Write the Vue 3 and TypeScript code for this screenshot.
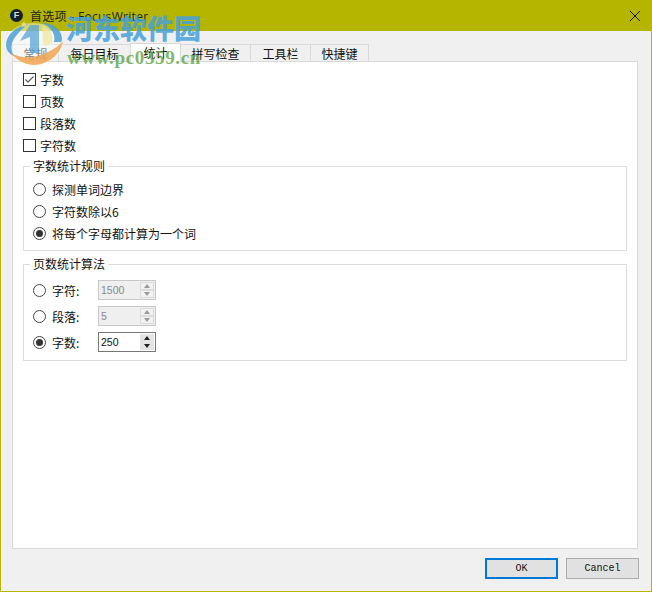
<script setup lang="ts">
const checks = [
  { label: '字数', on: true },
  { label: '页数', on: false },
  { label: '段落数', on: false },
  { label: '字符数', on: false },
]
const tabs = [
  { label: '常规', w: 47 },
  { label: '每日目标', w: 72 },
  { label: '统计', w: 51 },
  { label: '拼写检查', w: 70 },
  { label: '工具栏', w: 60 },
  { label: '快捷键', w: 58 },
]
const rules = [
  { label: '探测单词边界', on: false },
  { label: '字符数除以6', on: false },
  { label: '将每个字母都计算为一个词', on: true },
]
const algos = [
  { label: '字符:', value: '1500', on: false },
  { label: '段落:', value: '5', on: false },
  { label: '字数:', value: '250', on: true },
]
</script>

<template>
  <div class="win">
    <header class="title">
      <span class="appicon">F</span>
      <span class="title-text">首选项 - FocusWriter</span>
      <svg class="close" width="12" height="12" viewBox="0 0 12 12"><path d="M1 1L11 11M11 1L1 11" stroke="#111" stroke-width="1" fill="none" /></svg>
    </header>
    <main class="body">
      <nav class="tabs">
        <div v-for="(t, i) in tabs" :key="t.label" class="tab" :class="{ active: i === 2 }" :style="{ width: t.w + 'px' }">{{ t.label }}</div>
      </nav>
      <section class="pane">
        <div class="checks">
          <label v-for="c in checks" :key="c.label" class="check">
            <span class="box">
              <svg v-if="c.on" width="11" height="11" viewBox="0 0 11 11"><path d="M1.5 5.5L4 8L9.5 2.5" stroke="#666" stroke-width="1.3" fill="none" /></svg>
            </span>
            {{ c.label }}
          </label>
        </div>
        <fieldset class="group one">
          <legend>字数统计规则</legend>
          <label v-for="r in rules" :key="r.label" class="radio-row">
            <span class="radio" :class="{ on: r.on }"></span>{{ r.label }}
          </label>
        </fieldset>
        <fieldset class="group two">
          <legend>页数统计算法</legend>
          <div v-for="a in algos" :key="a.label" class="algo">
            <span class="radio" :class="{ on: a.on }"></span>
            <span class="algo-label">{{ a.label }}</span>
            <div class="spin" :class="{ enabled: a.on }">
              <span class="spin-val">{{ a.value }}</span>
              <span class="arrows">
                <span class="arrow"><i class="up"></i></span>
                <span class="arrow"><i class="down"></i></span>
              </span>
            </div>
          </div>
        </fieldset>
      </section>
      <footer class="foot">
        <button class="btn primary">OK</button>
        <button class="btn">Cancel</button>
      </footer>
    </main>

    <div class="mark">
      <svg class="logo" width="70" height="70" viewBox="0 0 70 70">
        <ellipse cx="33" cy="44" rx="29" ry="21" fill="#ffffff" opacity=".45" />
        <path d="M27 24C14 27 5 35 5 45C5 50 8 54 13 56C9 49 10 42 15 36C18 32 22 28 27 24Z" fill="#4f9fd6" opacity=".85" />
        <path d="M29 25H38V53H29V37L19 41C22 36 26 30 29 25Z" fill="#4f9fd6" opacity=".7" />
        <path d="M41 23C52 23 60 29 61 38C61 40 61 41 60 42L53 42C55 34 50 27 41 23Z" fill="#4f9fd6" opacity=".85" />
        <path d="M41 25C48 28 53 34 51 43L44 46L42 42Z" fill="#f0e59a" opacity=".7" />
        <path d="M62 41C60 54 47 65 33 65C24 65 15 60 10 53C19 58 28 58 36 56C47 53 56 48 62 41Z" fill="#f0a450" opacity=".85" />
        <path d="M23 21L24 23.5H26.5L24.6 25L25.3 27.5L23 26L20.7 27.5L21.4 25L19.5 23.5H22Z" fill="#e8dc80" />
      </svg>
      <span class="mark-cn">河东软件园</span>
      <span class="mark-url">www.pc0359.cn</span>
    </div>
  </div>
</template>

<style>
html, body { margin: 0; padding: 0; }
</style>

<style scoped>
.win {
  position: relative;
  width: 652px;
  height: 592px;
  box-sizing: border-box;
  display: flex;
  flex-direction: column;
  border: 1px solid #b5b500;
  border-top: 0;
  background: #f0f0f0;
  overflow: hidden;
  font-family: "Noto Sans CJK SC", "Liberation Sans", sans-serif;
  font-size: 12px;
  color: #111;
}
.title {
  height: 31px;
  flex: none;
  background: #b5b500;
  display: flex;
  align-items: center;
  padding: 0 9px 0 9px;
  box-sizing: border-box;
}
.appicon {
  width: 13px;
  height: 13px;
  border-radius: 50%;
  background: #16202c;
  color: #ddd;
  font: bold 9px/13px "Liberation Sans", sans-serif;
  text-align: center;
  margin-right: 7px;
}
.title-text {
  flex: 1;
  font-family: "Open Sans", "Noto Sans CJK SC", sans-serif;
  font-size: 12px;
  letter-spacing: .3px;
  color: #222;
}
.close { margin-right: 1px; }
.body {
  flex: 1;
  display: flex;
  flex-direction: column;
  padding: 13px 13px 0 11px;
  min-height: 0;
}
.tabs {
  display: flex;
  height: 17px;
  align-items: flex-start;
  flex: none;
  position: relative;
  z-index: 1;
}
.tab {
  height: 17px;
  box-sizing: border-box;
  border: 1px solid #d9d9d9;
  border-left-width: 0;
  border-bottom: 0;
  background: #f0f0f0;
  text-align: center;
  line-height: 17px;
}
.tab:first-child { border-left-width: 1px; }
.tab.active {
  height: 19px;
  background: #fff;
  border-left-width: 1px;
  margin-left: -1px;
  margin-top: -1px;
  line-height: 18px;
}
.pane {
  flex: 1;
  background: #fff;
  border: 1px solid #d9d9d9;
  box-sizing: border-box;
  padding: 6px 10px 0 10px;
  display: flex;
  flex-direction: column;
  min-height: 0;
}
.checks { display: flex; flex-direction: column; }
.check {
  height: 22px;
  display: flex;
  align-items: center;
  gap: 4px;
}
.box {
  width: 13px;
  height: 13px;
  box-sizing: border-box;
  border: 1px solid #333;
  background: #fff;
  display: flex;
  align-items: center;
  justify-content: center;
  flex: none;
}
.group {
  margin: 0;
  padding: 0 0 0 9px;
  border: 1px solid #dcdcdc;
  box-sizing: border-box;
  width: 604px;
  min-width: 0;
}
.group legend {
  padding: 0 3px;
  margin-left: -3px;
  line-height: 16px;
  height: 16px;
}
.group.one { height: 93px; margin-top: 2px; padding-top: 4px; }
.group.two { height: 105px; margin-top: 5px; padding-top: 5px; }
.radio-row {
  height: 22px;
  display: flex;
  align-items: center;
}
.radio {
  width: 13px;
  height: 13px;
  box-sizing: border-box;
  border: 1px solid #444;
  border-radius: 50%;
  background: #fff;
  margin-right: 6px;
  flex: none;
  position: relative;
}
.radio.on::after {
  content: "";
  position: absolute;
  left: 2px;
  top: 2px;
  width: 7px;
  height: 7px;
  border-radius: 50%;
  background: #333;
}
.algo {
  height: 26px;
  display: flex;
  align-items: center;
}
.algo-label { width: 46px; }
.spin {
  width: 58px;
  height: 20px;
  box-sizing: border-box;
  border: 1px solid #c8c8c8;
  background: #efefef;
  color: #8a8a8a;
  display: flex;
  align-items: center;
  padding-left: 2px;
  font-family: "Liberation Sans", sans-serif;
  font-size: 10.5px;
}
.spin.enabled {
  border-color: #777;
  background: #fff;
  color: #111;
}
.spin-val { flex: 1; }
.arrows {
  display: flex;
  flex-direction: column;
  width: 14px;
  height: 16px;
  margin-right: 1px;
}
.arrow {
  flex: 1;
  background: #f2f2f2;
  border: 1px solid #dcdcdc;
  box-sizing: border-box;
  display: flex;
  align-items: center;
  justify-content: center;
}
.spin.enabled .arrow { background: #e4e4e4; border-color: #e4e4e4; }
.arrow i {
  width: 0;
  height: 0;
  border-left: 3px solid transparent;
  border-right: 3px solid transparent;
}
.arrow .up { border-bottom: 4px solid #9a9a9a; }
.arrow .down { border-top: 4px solid #9a9a9a; }
.spin.enabled .arrow .up { border-bottom-color: #222; }
.spin.enabled .arrow .down { border-top-color: #222; }
.foot {
  height: 42px;
  flex: none;
  display: flex;
  justify-content: flex-end;
  gap: 8px;
  padding-top: 9px;
  box-sizing: border-box;
  margin-right: -1px;
}
.btn {
  width: 73px;
  height: 21px;
  box-sizing: border-box;
  border: 1px solid #adadad;
  background: #e1e1e1;
  padding: 0;
  font-family: "Liberation Mono", monospace;
  font-size: 10px;
  color: #111;
}
.btn.primary { border: 2px solid #0078d7; }
.mark {
  position: absolute;
  left: 0;
  top: 0;
  width: 210px;
  height: 70px;
  pointer-events: none;
  z-index: 5;
}
.logo { position: absolute; left: 0; top: 0; }
.mark-cn {
  position: absolute;
  left: 65px;
  top: 10px;
  font-family: "Noto Sans CJK SC", sans-serif;
  font-weight: 900;
  font-size: 27px;
  line-height: 36px;
  color: rgba(70, 160, 220, .85);
  white-space: nowrap;
}
.mark-url {
  position: absolute;
  left: 66px;
  top: 48px;
  font-family: "Liberation Serif", serif;
  font-weight: bold;
  font-size: 19px;
  line-height: 20px;
  letter-spacing: .65px;
  color: rgba(90, 165, 70, .8);
  white-space: nowrap;
}
</style>
